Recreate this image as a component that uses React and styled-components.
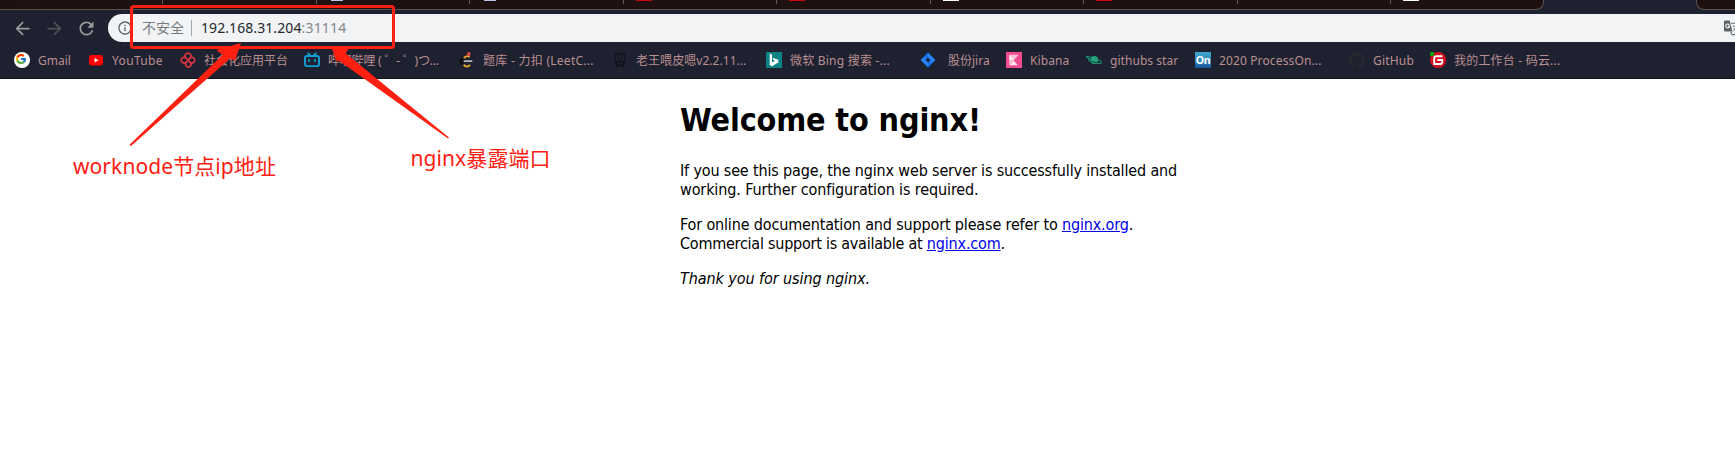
import React from "react";
import styled, { createGlobalStyle } from "styled-components";
import { FcGoogle } from "react-icons/fc";
import { FaGithub } from "react-icons/fa";
import { MdArrowBack, MdArrowForward, MdRefresh, MdInfoOutline } from "react-icons/md";

const UI_FONT = '"Noto Sans", "Noto Sans CJK SC", sans-serif';
const PAGE_FONT = '"DejaVu Sans Condensed", "DejaVu Sans", sans-serif';

const GlobalStyle = createGlobalStyle`
  * { box-sizing: border-box; }
  html, body { margin: 0; background: #fff; overflow: hidden; }
`;

const Window = styled.div`
  position: relative;
  width: 1735px;
  height: 461px;
  overflow: hidden;
  background: #fff;
  font-family: ${UI_FONT};
`;

const Chrome = styled.header`
  display: flex;
  flex-direction: column;
  height: 79px;
  background: #1e2130;
  border-bottom: 1px solid #12141f;
`;

const TabStrip = styled.div`
  display: flex;
  justify-content: space-between;
  height: 10px;
  overflow: hidden;
`;

const TabGroup = styled.div`
  display: flex;
  width: ${(p) => p.$width}px;
  background: #1f1110;
  border: solid #5d5150;
  border-width: ${(p) => (p.$side === "left" ? "0 1px 1px 0" : "0 0 1px 1px")};
  border-radius: ${(p) => (p.$side === "left" ? "0 0 8px 0" : "0 0 0 8px")};
`;

const Tab = styled.div`
  flex: none;
  display: flex;
  width: ${(p) => p.$width || 153.5}px;
  height: 4px;
  padding-left: ${(p) => p.$inset || 12}px;
  border-right: ${(p) => (p.$last ? "none" : "1px solid #64595a")};
`;

const TabIcon = styled.span`
  width: ${(p) => p.$width || 16}px;
  height: 1px;
  margin-left: ${(p) => (p.$width ? 2 : 0)}px;
  background: ${(p) => p.$fill};
`;

const NavBar = styled.div`
  display: flex;
  align-items: center;
  height: 28px;
  margin-top: 4px;
  padding-left: 6px;
`;

const NavButton = styled.span`
  flex: none;
  display: flex;
  justify-content: center;
  width: 32px;
  font-size: 21px;
  color: ${(p) => (p.$disabled ? "#4f5058" : "#9b9999")};
`;

const Omnibox = styled.div`
  flex: 1;
  display: flex;
  align-items: center;
  height: 28px;
  margin-left: 6px;
  padding-left: 9px;
  border-radius: 14px 0 0 14px;
  background: #f1f3f4;
  color: #5f6368;
  font-size: 14px;
  line-height: 20px;
  white-space: pre;
`;

const Security = styled.span`
  margin-left: 9px;
  color: #777b80;
`;

const Divider = styled.span`
  width: 1px;
  height: 16px;
  margin: 0 9px 0 7px;
  background: #a3a7ab;
`;

const Host = styled.span`
  color: #24272b;
  letter-spacing: 0.08px;
`;

const Port = styled.span`
  flex: 1;
  color: #84888c;
  letter-spacing: 0.2px;
`;

const BookmarkBar = styled.nav`
  display: flex;
  align-items: center;
  height: 36px;
  padding-left: 14px;
`;

const BookmarkItem = styled.span`
  flex: none;
  display: flex;
  align-items: center;
  gap: ${(p) => p.$gap || 8}px;
  width: ${(p) => p.$width}px;
  color: #bb8f90;
  font-size: 12px;
  line-height: 18px;
  white-space: pre;

  svg { flex: none; display: block; }
`;

const BookmarkLabel = styled.span`
  padding-top: 2px;
  letter-spacing: ${(p) => p.$track || 0}px;
`;

const Page = styled.main`
  width: 560px;
  margin: 22.4px 0 0 680px;
  color: #000;
  font-family: ${PAGE_FONT};
  font-size: 16px;
  line-height: 19px;
  white-space: nowrap;
`;

const Title = styled.h1`
  margin: 0 0 20.6px;
  font-size: 32px;
  line-height: 39px;
  letter-spacing: -0.13px;
`;

const Paragraph = styled.p`
  margin: 0 0 16px;
`;

const Run = styled.span`
  letter-spacing: ${(p) => p.$track}px;
`;

const Link = styled.a`
  color: #0000ee;
  text-decoration: underline;
  letter-spacing: -0.15px;
`;

const Overlay = styled.svg`
  position: absolute;
  inset: 0;
  pointer-events: none;
`;

const Note = styled.div`
  position: absolute;
  left: ${(p) => p.$x}px;
  top: ${(p) => p.$y}px;
  color: #ff2012;
  font-size: 21px;
  line-height: 28px;
  letter-spacing: 0.08px;
  white-space: nowrap;
`;

const Svg = ({ children, w = 16 }) => (
  <svg width={w} height="16" viewBox={`0 0 ${w} 16`} fill="none">{children}</svg>
);

const Google = () => (
  <svg width="16" height="16" viewBox="0 0 16 16">
    <circle cx="8" cy="8" r="8" fill="#fff" />
    <FcGoogle x="1" y="1" width="14" height="14" />
  </svg>
);

const YouTube = () => (
  <Svg>
    <rect x="1" y="3" width="14" height="10.5" rx="2.4" fill="#f00" />
    <path d="M6.5 5.9v4.6l4-2.3z" fill="#fff" />
  </Svg>
);

const Knot = () => (
  <Svg>
    <g stroke="#dc3540" strokeWidth="1.7" strokeLinecap="round">
      <path d="M5.2 5.2A3 3 0 1 1 10.7 5.3C10.3 6.8 8.6 7 8 8.2" />
      <path d="M5.3 10.7A2.8 2.8 0 1 1 4.8 5.6C6.4 5.8 6.8 7.2 8 8" />
      <path d="M10.8 5.7A2.8 2.8 0 1 1 11 10.9C9.4 10.8 9.2 9 8 8" />
      <path d="M10.7 10.8A2.8 2.8 0 1 1 5.5 12.2C5.4 10.5 7 10 8 8.2" />
    </g>
  </Svg>
);

const Bilibili = () => (
  <Svg>
    <g stroke="#0d9fd4" strokeWidth="1.9" strokeLinecap="round">
      <rect x="1" y="4" width="14" height="10.1" rx="2.2" />
      <path d="M4.3 1.5l2 2M11.7 1.5l-2 2M5 8v1M11 8v1" />
    </g>
  </Svg>
);

const LeetCode = () => (
  <Svg>
    <path d="M8.2 2.6L1.6 8.2Q.9 9 1.6 9.8L5 13.2" stroke="#080808" strokeWidth="1.8" />
    <path d="M4.6 6L6.8 4.4Q8.6 3.4 10.6 5.2M4.6 12.6Q8 16.4 11 12.8" stroke="#efa52e" strokeWidth="1.8" />
    <path d="M5.6 9.2h7" stroke="#b8b8b8" strokeWidth="1.7" strokeLinecap="round" />
    <circle cx="9.8" cy="2" r="1.9" fill="#d9474b" />
  </Svg>
);

const Bear = () => (
  <Svg>
    <g stroke="#0c0d13" strokeWidth="1">
      <path d="M4 3.8Q2.4 2.6 3.5 1.4Q5.2.6 6 2.2H10Q10.8.6 12.5 1.4Q13.6 2.6 12 3.8Q14.8 7.4 11.4 10H4.6Q1.2 7.4 4 3.8z" />
      <path d="M4.6 10l-2.4 2M4.4 10.8v3.4h2.2v-1.6h2.8v1.6h2.2v-3.4M11.4 10l2.4 2M6.2 8h3.6" />
      <path d="M5.8 5v1.2M10.2 5v1.2" />
    </g>
  </Svg>
);

const Bing = () => (
  <Svg>
    <rect width="16" height="16" fill="#0c8484" />
    <path d="M3.7 1.8l2.3.8v7.9l3-1.7-1.6-.8-.9-2.3 5.8 2v2.7L6 14.2 3.7 12.9z" fill="#fff" />
  </Svg>
);

const Jira = () => (
  <Svg>
    <path d="M8 .4L15.4 8 8 15.6.6 8z" fill="#2582fb" />
    <path d="M4 4.5L8 .4v5.2L5.6 8zM12 11.5L8 15.6v-5.2L10.4 8z" fill="#1767dc" opacity=".6" />
    <path d="M8 5.6L10.4 8 8 10.4 5.6 8z" fill="#1a2440" />
  </Svg>
);

const KibanaIcon = () => (
  <Svg>
    <rect width="16" height="16" fill="#ee4e91" />
    <path d="M3.3 2.8h9.4L3.3 13.2z" fill="#f9bfd6" />
    <path d="M3.3 2.8v5L8 8z" fill="#fff" opacity=".7" />
    <path d="M3.3 13.2L7.7 8.4l4 4.8z" fill="#fde5ee" />
  </Svg>
);

const Planet = () => (
  <Svg>
    <circle cx="8.2" cy="8" r="3.9" fill="#21a179" />
    <path d="M4.2 7.2C1.5 5.8.2 5.2.6 4.8 1 4.5 3 4.7 4.6 5.2M2.2 7.5C5 11 13.4 12 15.2 11c.8-.8-1.2-2.4-3.2-3.4" stroke="#1e9470" strokeWidth="1.1" />
    <path d="M4.6 8.8q3 1.9 7 1.8" stroke="#1e2130" strokeWidth=".7" />
  </Svg>
);

const OnBadge = styled.span`
  flex: none;
  width: 16px;
  height: 16px;
  background: linear-gradient(#40a9cf, #2b7fb9 60%, #1b559c);
  color: #fff;
  font: bold 10.5px/16px ${UI_FONT};
  letter-spacing: -0.4px;
  text-align: center;
`;

const Gitee = () => (
  <Svg>
    <circle cx="8" cy="8" r="8" fill="#d40d20" />
    <path d="M12.5 4.2H6.4Q4.2 4.2 4.2 6.4V12h5.9q2.1 0 2.1-2.1V8H7.3" stroke="#fff" strokeWidth="1.9" />
    <circle cx="2.1" cy="2.1" r="2.2" fill="#09a50d" />
  </Svg>
);

const Translate = () => (
  <Svg w={11}>
    <path d="M6.8 3.2H15v11.4H8.2L6.8 12" fill="#f1f3f4" stroke="#6a6e73" strokeWidth="1.1" />
    <path d="M1.4.4h4.2l2.8 11.2h-7Q0 11.6 0 10.2V1.8Q0 .4 1.4.4z" fill="#5c6066" />
    <path d="M5.4 4.8Q4.4 3.7 3 4.1 1.6 4.7 1.7 6.2q.3 1.8 2 1.8 1.8 0 2-1.9H3.8" stroke="#f1f3f4" strokeWidth="1.1" />
    <path d="M8.5 6.2H11M9.4 8l1.6 2M9.2 11.2L11 9.4" stroke="#777b80" />
  </Svg>
);

const BOOKMARKS = [
  { icon: <Google />, label: "Gmail", width: 74 },
  { icon: <YouTube />, label: "YouTube", width: 92, track: 0.35 },
  { icon: <Knot />, label: "社会化应用平台", width: 124 },
  { icon: <Bilibili />, label: "哔哩哔哩 ( ゜- ゜)つ...", width: 155, track: -0.2 },
  { icon: <LeetCode />, label: "题库 - 力扣 (LeetC...", width: 153, track: 0.27 },
  { icon: <Bear />, label: "老王喂皮嗯v2.2.11...", width: 154, track: 0.05 },
  { icon: <Bing />, label: "微软 Bing 搜索 -...", width: 154, track: 0.22 },
  { icon: <Jira />, label: "股份jira", width: 86, gap: 12 },
  { icon: <KibanaIcon />, label: "Kibana", width: 80, track: 0.1 },
  { icon: <Planet />, label: "githubs star", width: 109, track: 0.05 },
  { icon: <OnBadge>On</OnBadge>, label: "2020 ProcessOn...", width: 154, track: 0.13 },
  { icon: <FaGithub size={16} color="#242a2e" />, label: "GitHub", width: 81, track: 0.2 },
  { icon: <Gitee />, label: "我的工作台 - 码云...", width: 140, track: 0.2 },
];

const TABS = [
  { width: 163, inset: 20, fill: "#191517", icon: 12 },
  { fill: "transparent" },
  { fill: "#b9c4e6", icon: 12 },
  { fill: "#b9c4e6", icon: 12 },
  { fill: "#cc0a0a" },
  { fill: "#cc0a0a" },
  { fill: "#ffffff" },
  { fill: "#cc0a0a" },
  { fill: "transparent" },
  { width: 152, fill: "#ffffff", last: true },
];

export default function App() {
  return (
    <Window>
      <GlobalStyle />
      <Chrome>
        <TabStrip>
          <TabGroup $side="left" $width={1544}>
            {TABS.map((tab, i) => (
              <Tab key={i} $width={tab.width} $inset={tab.inset} $last={tab.last}>
                <TabIcon $fill={tab.fill} $width={tab.icon} />
              </Tab>
            ))}
          </TabGroup>
          <TabGroup $side="right" $width={39} />
        </TabStrip>
        <NavBar>
          <NavButton><MdArrowBack /></NavButton>
          <NavButton $disabled><MdArrowForward /></NavButton>
          <NavButton><MdRefresh /></NavButton>
          <Omnibox>
            <MdInfoOutline size={16} />
            <Security>不安全</Security>
            <Divider />
            <Host>192.168.31.204</Host>
            <Port>:31114</Port>
            <Translate />
          </Omnibox>
        </NavBar>
        <BookmarkBar>
          {BOOKMARKS.map((b) => (
            <BookmarkItem key={b.label} $width={b.width} $gap={b.gap}>
              {b.icon}
              <BookmarkLabel $track={b.track}>{b.label}</BookmarkLabel>
            </BookmarkItem>
          ))}
        </BookmarkBar>
      </Chrome>

      <Page>
        <Title>Welcome to nginx!</Title>
        <Paragraph>
          <Run $track={-0.155}>If you see this page, the nginx web server is successfully installed and</Run>
          <br />
          <Run $track={-0.12}>working. Further configuration is required.</Run>
        </Paragraph>
        <Paragraph>
          <Run $track={-0.155}>For online documentation and support please refer to </Run>
          <Link>nginx.org</Link>.
          <br />
          <Run $track={-0.24}>Commercial support is available at </Run>
          <Link>nginx.com</Link>.
        </Paragraph>
        <Paragraph>
          <Run as="em" $track={-0.08}>Thank you for using nginx.</Run>
        </Paragraph>
      </Page>

      <Overlay width="1735" height="461" viewBox="0 0 1735 461" fill="#ff2012">
        <rect x="131.5" y="6.5" width="262" height="41" rx="2" fill="none" stroke="#ff2012" strokeWidth="3" />
        <path d="M241 43L216.5 50L222.5 55L129.5 144.7L131 146L230 58.5L235 60.5z" />
        <path d="M331.5 47.5L348.5 49.2L345.5 53.3L449 137.5L448 138.6L340 61.5L336 60.5z" />
      </Overlay>
      <Note $x={73} $y={152}>worknode节点ip地址</Note>
      <Note $x={410.5} $y={144}>nginx暴露端口</Note>
    </Window>
  );
}
